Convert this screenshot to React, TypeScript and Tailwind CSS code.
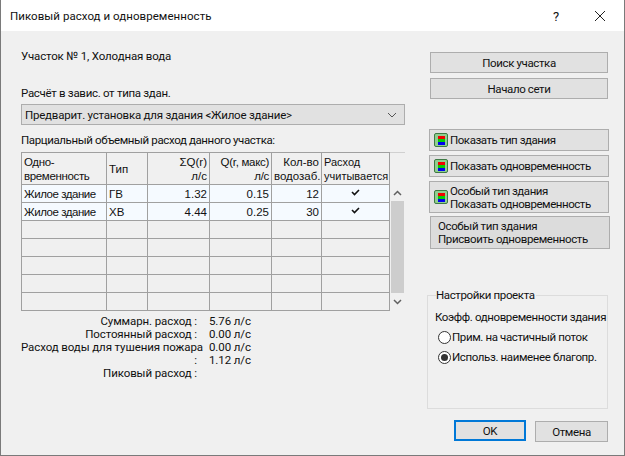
import React from "react";

const rows = [
  { name: "Жилое здание", type: "ГВ", sum: "1.32", max: "0.15", count: "12" },
  { name: "Жилое здание", type: "ХВ", sum: "4.44", max: "0.25", count: "30" },
];

function CheckMark() {
  return (
    <svg width="9" height="7" viewBox="0 0 9 7" className="mx-auto -translate-y-[1px]">
      <path d="M1 3l2.5 2.5L8 1" fill="none" stroke="#111" strokeWidth="1.6" />
    </svg>
  );
}

function ColorIcon() {
  return (
    <span className="flex h-[14px] w-[14px] shrink-0 flex-col items-center justify-center rounded-[2px] border border-[#3f7a45] bg-[#8fcf8f]">
      <span className="h-[3px] w-[7px] bg-[#f00000]" />
      <span className="h-[3px] w-[7px] bg-[#00d000]" />
      <span className="h-[3px] w-[7px] bg-[#0000f0]" />
    </span>
  );
}

function PlainButton({ label, className = "" }: { label: string; className?: string }) {
  return (
    <button className={`h-[21px] w-[178px] border border-[#adadad] bg-[#e1e1e1] pt-px text-center ${className}`}>
      {label}
    </button>
  );
}

function IconButton({ lines, className = "" }: { lines: string[]; className?: string }) {
  return (
    <div className={`flex w-[180px] items-center gap-[2px] border border-[#adadad] bg-[#e1e1e1] pl-[4px] tracking-[-0.45px] ${className}`}>
      <ColorIcon />
      <div className="whitespace-nowrap pt-px leading-[13px]">
        {lines.map((l) => (
          <div key={l}>{l}</div>
        ))}
      </div>
    </div>
  );
}

function Radio({ label, checked }: { label: string; checked?: boolean }) {
  return (
    <div className="flex h-[20px] items-center gap-[1px] pl-[3px]">
      <span className="flex h-[13px] w-[13px] items-center justify-center rounded-full border border-[#333] bg-white">
        {checked && <span className="h-[7px] w-[7px] rounded-full bg-[#333]" />}
      </span>
      <span className="whitespace-nowrap">{label}</span>
    </div>
  );
}

const cell = "border border-[#a0a0a0] px-[2px] align-middle whitespace-nowrap";

export default function App() {
  return (
    <div className="flex h-[456px] w-[625px] flex-col overflow-hidden border-x border-b border-[#7a7a7a] bg-[#f0f0f0] font-['Roboto',sans-serif] text-[11.5px] leading-[13px] tracking-[-0.38px] text-[#111]">
      {/* Title bar */}
      <div className="flex h-[31px] shrink-0 items-center bg-white pl-[9px] pt-[1px]">
        <span className="flex-1 tracking-[0.05px]">Пиковый расход и одновременность</span>
        <span className="w-[14px] text-center text-[13px]">?</span>
        <svg width="12" height="12" viewBox="0 0 12 12" className="ml-[31px] mr-[18px]">
          <path d="M1 1l10 10M11 1L1 11" stroke="#222" strokeWidth="1" />
        </svg>
      </div>

      <div className="flex flex-1">
        {/* Left side */}
        <div className="ml-[20px] flex w-[384px] flex-col">
          <div className="mt-[19px] tracking-[-0.15px]">Участок № 1, Холодная вода</div>
          <div className="mt-[24px] tracking-[-0.3px]">Расчёт в завис. от типа здан.</div>
          <div className="mt-[4px] flex h-[21px] items-center justify-between border border-[#adadad] bg-[#e1e1e1] pl-[3px] pr-[7px]">
            <span className="pt-px tracking-[-0.22px]">Предварит. установка для здания &lt;Жилое здание&gt;</span>
            <svg width="10" height="6" viewBox="0 0 10 6">
              <path d="M1 1l4 4 4-4" fill="none" stroke="#555" strokeWidth="1" />
            </svg>
          </div>
          <div className="mt-[9px]">Парциальный объемный расход данного участка:</div>

          {/* Grid */}
          <div className="mt-[5px] flex font-['Liberation_Sans',sans-serif] text-[11.5px] leading-[14px] tracking-normal">
            <table className="w-[368px] table-fixed border-collapse">
              <colgroup>
                <col className="w-[85px]" />
                <col className="w-[41px]" />
                <col className="w-[62px]" />
                <col className="w-[62px]" />
                <col className="w-[50px]" />
                <col className="w-[68px]" />
              </colgroup>
              <thead>
                <tr className="h-[32px] font-normal">
                  <th className={`${cell} text-left font-normal tracking-[-0.35px]`}>Одно-<br />временность</th>
                  <th className={`${cell} text-left font-normal`}>Тип</th>
                  <th className={`${cell} text-right font-normal`}>ΣQ(r)<br />л/с</th>
                  <th className={`${cell} text-right font-normal tracking-[-0.3px]`}>Q(r, макс)<br />л/с</th>
                  <th className={`${cell} px-[1px] text-right font-normal`}>Кол-во<br />водозаб.</th>
                  <th className={`${cell} px-[1px] text-left text-[11px] font-normal`}>Расход<br />учитывается</th>
                </tr>
              </thead>
              <tbody>
                {rows.map((r, i) => (
                  <tr key={i} className="h-[18px] bg-[#f5faff]">
                    <td className={`${cell} tracking-[-0.45px]`}>{r.name}</td>
                    <td className={cell}>{r.type}</td>
                    <td className={`${cell} text-right`}>{r.sum}</td>
                    <td className={`${cell} text-right`}>{r.max}</td>
                    <td className={`${cell} text-right`}>{r.count}</td>
                    <td className={cell}><CheckMark /></td>
                  </tr>
                ))}
                {[0, 1, 2, 3, 4].map((i) => (
                  <tr key={i} className="h-[18px]">
                    {[0, 1, 2, 3, 4, 5].map((c) => (
                      <td key={c} className={cell} />
                    ))}
                  </tr>
                ))}
              </tbody>
            </table>
            {/* Scrollbar */}
            <div className="flex w-[17px] flex-col">
              <div className="h-[32px] border-t border-[#d0d0d0]" />
              <div className="flex h-[17px] items-center justify-center">
                <svg width="9" height="6" viewBox="0 0 9 6">
                  <path d="M1 5l3.5-3.5L8 5" fill="none" stroke="#606060" strokeWidth="1.5" />
                </svg>
              </div>
              <div className="mx-px h-[92px] bg-[#cdcdcd]" />
              <div className="flex h-[17px] items-center justify-center">
                <svg width="9" height="6" viewBox="0 0 9 6">
                  <path d="M1 1l3.5 3.5L8 1" fill="none" stroke="#606060" strokeWidth="1.5" />
                </svg>
              </div>
            </div>
          </div>

          {/* Summary */}
          <div className="mt-[4px] flex gap-[12px] tracking-[-0.1px]">
            <div className="w-[176px] whitespace-nowrap text-right">
              <div>Суммарн. расход :</div>
              <div>Постоянный расход :</div>
              <div>Расход воды для тушения пожара</div>
              <div>:</div>
              <div>Пиковый расход :</div>
            </div>
            <div>
              <div>5.76 л/с</div>
              <div>0.00 л/с</div>
              <div>0.00 л/с</div>
              <div>1.12 л/с</div>
            </div>
          </div>
        </div>

        {/* Right side */}
        <div className="ml-[24px] flex flex-1 flex-col items-start">
          <PlainButton label="Поиск участка" className="ml-px mt-[21px]" />
          <PlainButton label="Начало сети" className="ml-px mt-[5px]" />
          <IconButton lines={["Показать тип здания"]} className="mt-[30px] h-[22px]" />
          <IconButton lines={["Показать одновременность"]} className="mt-[4px] h-[22px]" />
          <IconButton lines={["Особый тип здания", "Показать одновременность"]} className="mt-[4px] h-[32px]" />
          <div className="ml-px mt-[3px] flex h-[33px] w-[180px] flex-col justify-center border border-[#adadad] bg-[#dcdcdc] pl-[7px]">
            <div>Особый тип здания</div>
            <div>Присвоить одновременность</div>
          </div>

          {/* Project settings group */}
          <fieldset className="mt-[40px] h-[120px] w-[181px] -translate-x-[2px] border border-[#dcdcdc] pl-[7px]">
            <legend className="ml-[1px] bg-[#f0f0f0] pr-[1px]">Настройки проекта</legend>
            <div className="mt-[9px] whitespace-nowrap">Коэфф. одновременности здания</div>
            <div className="mt-[3px]">
              <Radio label="Прим. на частичный поток" />
              <Radio label="Использ. наименее благопр." checked />
            </div>
          </fieldset>

          <div className="mt-[11px] flex w-[179px] items-start justify-end gap-[9px]">
            <button className="h-[21px] w-[72px] border-2 border-[#0078d7] bg-[#e1e1e1] pt-px">OK</button>
            <button className="mt-px h-[21px] w-[73px] border border-[#adadad] bg-[#e1e1e1] pt-px">Отмена</button>
          </div>
        </div>
      </div>
    </div>
  );
}
